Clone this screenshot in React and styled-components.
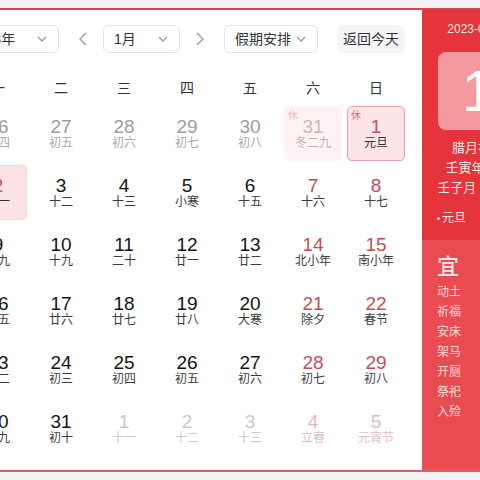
import React from 'react'
import styled, { createGlobalStyle } from 'styled-components'

const GlobalStyle = createGlobalStyle`
  html, body {
    margin: 0;
    padding: 0;
    background: #f4f2f2;
    overflow: hidden;
    font-family: "Liberation Sans", "Noto Sans CJK SC", sans-serif;
  }
`;

const Page = styled.div`
  width: 480px;
  height: 480px;
  overflow: hidden;
  padding-top: 8px;
  box-sizing: border-box;
`;

// the screenshot is a crop, so the card starts left of the window
const Card = styled.div`
  display: flex;
  width: 600px;
  margin-left: -48px;
  background: #fff;
  border-top: 2px solid #cc4a52;
  border-bottom: 2px solid #d2636a;
`;

const Main = styled.div`
  width: 470px;
  box-sizing: border-box;
  padding: 15px 17px 14px;
`;

const Toolbar = styled.div`
  display: flex;
  align-items: center;
  height: 28px;
  margin: 0 0 16px -10px;
`;

const Select = styled.div`
  box-sizing: border-box;
  width: ${p => p.$width}px;
  height: 28px;
  display: flex;
  align-items: center;
  justify-content: space-between;
  padding: 0 10px;
  border: 1px solid #e3e3e3;
  border-radius: 6px;
  font-size: 14px;
  color: #333;
  line-height: 26px;
`;

const Arrow = styled.div`
  width: 24px;
  height: 28px;
  display: flex;
  align-items: center;
  justify-content: center;
  margin: ${p => (p.$dir === 'prev' ? '0 8px 0 12px' : '0 12px 0 8px')};
`;

const TodayButton = styled.div`
  margin-left: auto;
  width: 68px;
  height: 28px;
  border-radius: 6px;
  background: #f5f5f7;
  font-size: 14px;
  color: #333;
  line-height: 28px;
  text-align: center;
`;

const WeekHeader = styled.div`
  display: grid;
  grid-template-columns: repeat(7, 58px);
  column-gap: 5px;
  height: 36px;
  align-items: center;
  margin-bottom: 1px;
`;

const WeekDay = styled.div`
  text-align: center;
  font-size: 14px;
  color: #333;
`;

const Grid = styled.div`
  display: grid;
  grid-template-columns: repeat(7, 58px);
  grid-auto-rows: 55px;
  gap: 4px 5px;
`;

const palette = {
  cur: { num: '#141414', lunar: '#3c3c3c' },
  weekend: { num: '#c94b58', lunar: '#3c3c3c' },
  prev: { num: '#9c9c9c', lunar: '#a8a8a8' },
  next: { num: '#c9c9c9', lunar: '#cdcdcd' },
  nextWeekend: { num: '#e6b9be', lunar: '#dcc0c3' },
  prevHoliday: { num: '#d9b3b8', lunar: '#ccb2b5', bg: '#fdf3f4', rest: '#eebfc5' },
  holiday: { num: '#c8505c', lunar: '#333', bg: '#fce4e7', border: '#e3a1a9', rest: '#d8707b' },
  today: { num: '#c8505c', lunar: '#333', bg: '#fde3e6', border: '#fbd2d7', rest: '#d8707b' },
};

const Cell = styled.div`
  position: relative;
  box-sizing: border-box;
  display: flex;
  flex-direction: column;
  align-items: center;
  padding-top: 9px;
  border-radius: 5px;
  background: ${p => palette[p.$kind].bg || 'transparent'};
  border: 1px solid ${p => palette[p.$kind].border || 'transparent'};
`;

const DayNum = styled.div`
  font-size: 19px;
  line-height: 22px;
  color: ${p => palette[p.$kind].num};
`;

const Lunar = styled.div`
  margin-top: -2px;
  font-size: 12px;
  line-height: 15px;
  color: ${p => palette[p.$kind].lunar};
  white-space: nowrap;
`;

const Rest = styled.span`
  position: absolute;
  top: 3px;
  left: 3px;
  font-size: 10px;
  line-height: 12px;
  color: ${p => palette[p.$kind].rest};
`;

const Side = styled.div`
  width: 112px;
  display: flex;
  flex-direction: column;
  color: rgba(255, 255, 255, 0.92);
`;

const SideTop = styled.div`
  background: #e5353c;
  padding: 10px 0 12px;
  display: flex;
  flex-direction: column;
  align-items: center;
`;

const DateLine = styled.div`
  font-size: 12px;
  line-height: 18px;
`;

const BigDay = styled.div`
  margin-top: 14px;
  width: 80px;
  height: 78px;
  border-radius: 8px;
  background: rgba(255, 255, 255, 0.5);
  color: #fff;
  font-size: 58px;
  line-height: 78px;
  text-align: center;
`;

const InfoLines = styled.div`
  margin-top: 8px;
  font-size: 13px;
  line-height: 20px;
  text-align: center;
`;

const Festival = styled.div`
  align-self: flex-start;
  margin: 10px 0 0 15px;
  font-size: 12px;
  line-height: 20px;
  display: flex;
  align-items: center;
  gap: 2px;
`;

const Dot = styled.span`
  width: 3px;
  height: 3px;
  border-radius: 50%;
  background: rgba(255, 255, 255, 0.9);
`;

const SideBottom = styled.div`
  flex: 1;
  background: #ea4b51;
  padding: 14px 0 0 15px;
`;

const YiTitle = styled.div`
  font-size: 22px;
  line-height: 26px;
  font-weight: 500;
  color: #fde6e6;
`;

const YiList = styled.div`
  margin-top: 2px;
  font-size: 12px;
  line-height: 20px;
  color: rgba(255, 235, 235, 0.92);
`;

const Chevron = () => (
  <svg width="12" height="12" viewBox="0 0 12 12">
    <polyline points="2,4 6,8 10,4" fill="none" stroke="#9a9a9a" strokeWidth="1.3" />
  </svg>
);

const ArrowIcon = ({ dir }) => (
  <svg width="10" height="16" viewBox="0 0 10 16">
    <polyline
      points={dir === 'prev' ? '8,2 2,8 8,14' : '2,2 8,8 2,14'}
      fill="none"
      stroke="#9a9a9a"
      strokeWidth="1.4"
    />
  </svg>
);

const weekDays = ['一', '二', '三', '四', '五', '六', '日'];

const days = [
  ['26', '初四', 'prev'], ['27', '初五', 'prev'], ['28', '初六', 'prev'], ['29', '初七', 'prev'],
  ['30', '初八', 'prev'], ['31', '冬二九', 'prevHoliday', true], ['1', '元旦', 'holiday', true],
  ['2', '十一', 'today', true], ['3', '十二'], ['4', '十三'], ['5', '小寒'], ['6', '十五'],
  ['7', '十六', 'weekend'], ['8', '十七', 'weekend'],
  ['9', '三九'], ['10', '十九'], ['11', '二十'], ['12', '廿一'], ['13', '廿二'],
  ['14', '北小年', 'weekend'], ['15', '南小年', 'weekend'],
  ['16', '廿五'], ['17', '廿六'], ['18', '廿七'], ['19', '廿八'], ['20', '大寒'],
  ['21', '除夕', 'weekend'], ['22', '春节', 'weekend'],
  ['23', '初二'], ['24', '初三'], ['25', '初四'], ['26', '初五'], ['27', '初六'],
  ['28', '初七', 'weekend'], ['29', '初八', 'weekend'],
  ['30', '初九'], ['31', '初十'], ['1', '十一', 'next'], ['2', '十二', 'next'], ['3', '十三', 'next'],
  ['4', '立春', 'nextWeekend'], ['5', '元宵节', 'nextWeekend'],
];

const yi = ['动土', '祈福', '安床', '架马', '开厕', '祭祀', '入殓'];

const App = () => (
  <Page>
    <GlobalStyle />
    <Card>
      <Main>
        <Toolbar>
          <Select $width={100}>
            <span>2023年</span>
            <Chevron />
          </Select>
          <Arrow $dir="prev">
            <ArrowIcon dir="prev" />
          </Arrow>
          <Select $width={77}>
            <span>1月</span>
            <Chevron />
          </Select>
          <Arrow $dir="next">
            <ArrowIcon dir="next" />
          </Arrow>
          <Select $width={94}>
            <span>假期安排</span>
            <Chevron />
          </Select>
          <TodayButton>返回今天</TodayButton>
        </Toolbar>

        <WeekHeader>
          {weekDays.map(d => (
            <WeekDay key={d}>{d}</WeekDay>
          ))}
        </WeekHeader>

        <Grid>
          {days.map(([n, lunar, kind = 'cur', rest], i) => (
            <Cell key={i} $kind={kind}>
              {rest && <Rest $kind={kind}>休</Rest>}
              <DayNum $kind={kind}>{n}</DayNum>
              <Lunar $kind={kind}>{lunar}</Lunar>
            </Cell>
          ))}
        </Grid>
      </Main>

      <Side>
        <SideTop>
          <DateLine>2023-01-01</DateLine>
          <BigDay>1</BigDay>
          <InfoLines>
            <div>腊月初十</div>
            <div>壬寅年虎年</div>
            <div>壬子月 己未日</div>
          </InfoLines>
          <Festival>
            <Dot />
            元旦
          </Festival>
        </SideTop>
        <SideBottom>
          <YiTitle>宜</YiTitle>
          <YiList>
            {yi.map(t => (
              <div key={t}>{t}</div>
            ))}
          </YiList>
        </SideBottom>
      </Side>
    </Card>
  </Page>
);

export default App
